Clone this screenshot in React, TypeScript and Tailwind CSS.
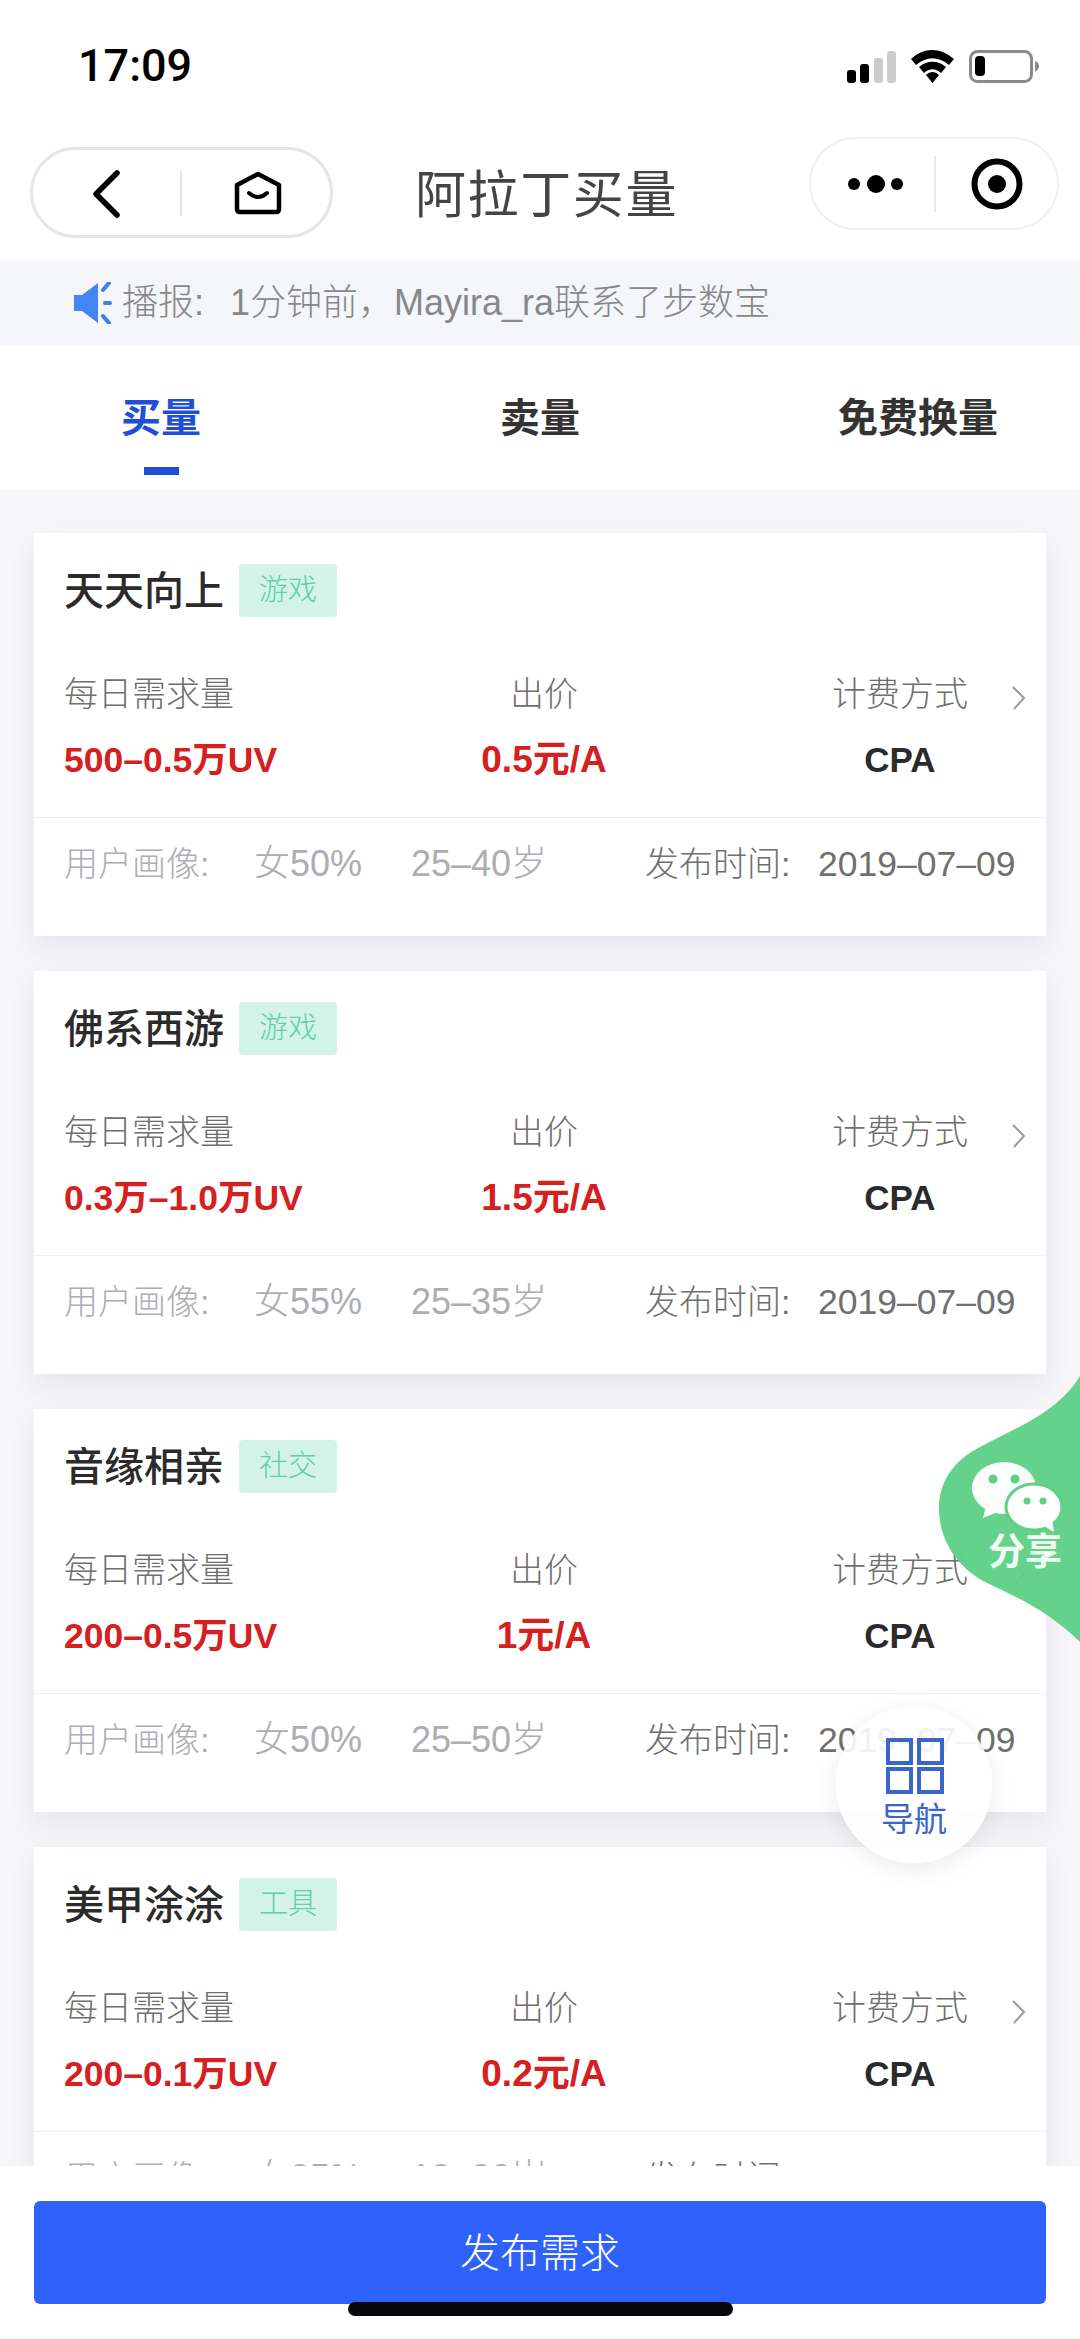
const cards = [
  { name: "天天向上", tag: "游戏", need: "500–0.5万UV", price: "0.5元/A", female: "女50%", age: "25–40岁" },
  { name: "佛系西游", tag: "游戏", need: "0.3万–1.0万UV", price: "1.5元/A", female: "女55%", age: "25–35岁" },
  { name: "音缘相亲", tag: "社交", need: "200–0.5万UV", price: "1元/A", female: "女50%", age: "25–50岁" },
  { name: "美甲涂涂", tag: "工具", need: "200–0.1万UV", price: "0.2元/A", female: "女35%", age: "18–30岁" },
];

const font = "font-['Liberation_Sans','Noto_Sans_CJK_SC',sans-serif]";

function StatusBar() {
  return (
    <div className="flex h-[130px] shrink-0 items-start bg-white pl-[78px] pr-[34px] pt-[44px]">
      <span className="font-['Roboto',sans-serif] text-[45px] font-medium leading-[44px] text-black">17:09</span>
      <svg className="ml-auto mt-[5px]" width="204" height="36" viewBox="0 0 204 36">
        <rect x="5" y="21" width="9" height="13" rx="3" fill="#000" />
        <rect x="18" y="15" width="9" height="19" rx="3" fill="#000" />
        <rect x="32" y="9" width="9" height="25" rx="3" fill="#ccc" />
        <rect x="45" y="2" width="9" height="32" rx="3" fill="#ccc" />
        <path d="M69 10 C82 -2 98 -2 112 10 L107 16 C96 7 85 7 74 16 Z" fill="#000" />
        <path d="M77 18 C85 11 96 11 104 18 L99 24 C93 19 88 19 82 24 Z" fill="#000" />
        <path d="M84 26 C88 22 93 22 97 26 L90.5 34 Z" fill="#000" />
        <rect x="128.5" y="2.5" width="61" height="30" rx="7" fill="none" stroke="#8a8a8a" strokeWidth="3" />
        <rect x="133" y="7" width="10" height="20" rx="4" fill="#000" />
        <path d="M193 12 C196 13 197 15 197 17 C197 19 196 21 193 23 Z" fill="#8a8a8a" />
      </svg>
    </div>
  );
}

function NavBar() {
  return (
    <div className="flex h-[130px] shrink-0 items-start bg-white pl-[30px] pr-[21px] pt-[7px]">
      <div className="mt-[10px] flex h-[91px] w-[303px] items-center rounded-full border-[3px] border-[#e6e6e6] bg-white">
        <svg className="ml-[58px] mt-[2px]" width="30" height="48" viewBox="0 0 30 48">
          <path d="M26 3 L5 24 L26 45" fill="none" stroke="#000" strokeWidth="5.5" strokeLinecap="round" strokeLinejoin="round" />
        </svg>
        <div className="ml-[59px] mt-[2px] h-[45px] w-[2px] bg-[#e6e6e6]" />
        <svg className="ml-[52px]" width="48" height="44" viewBox="0 0 48 44">
          <path d="M24 3 L45 14 L45 38 Q45 41 42 41 L6 41 Q3 41 3 38 L3 14 Z" fill="none" stroke="#000" strokeWidth="4.5" strokeLinejoin="round" />
          <path d="M15 22 Q24 30 33 22" fill="none" stroke="#000" strokeWidth="4" strokeLinecap="round" />
        </svg>
      </div>
      <span className="ml-[82px] mt-[31px] text-[51px] font-normal leading-[56px] tracking-[1.6px] text-[#444444]">阿拉丁买量</span>
      <div className="ml-auto flex h-[93px] w-[250px] items-center rounded-full border-[2px] border-[#f0f0f0] bg-white">
        <svg className="ml-[33px]" width="62" height="20" viewBox="0 0 62 20">
          <circle cx="10" cy="10" r="6" fill="#000" />
          <circle cx="32" cy="10" r="9" fill="#000" />
          <circle cx="53" cy="10" r="6" fill="#000" />
        </svg>
        <div className="ml-[28px] h-[56px] w-[2px] bg-[#e8e8e8]" />
        <svg className="ml-[35px]" width="52" height="52" viewBox="0 0 52 52">
          <circle cx="26" cy="26" r="22.5" fill="none" stroke="#000" strokeWidth="6" />
          <circle cx="26" cy="26" r="9" fill="#000" />
        </svg>
      </div>
    </div>
  );
}

function Notice() {
  return (
    <div className="flex h-[85px] shrink-0 items-center bg-[#f4f6fa] pl-[74px] text-[36px] font-light text-[#888888]">
      <svg width="40" height="42" viewBox="0 0 40 42" className="mr-[8px]">
        <path d="M0 13 H8 L24 1 V41 L8 29 H0 Z" fill="#4186f2" />
        <path d="M29 8 L35 1" stroke="#3f7fe8" strokeWidth="4" strokeLinecap="round" />
        <path d="M31 21 H36" stroke="#3f7fe8" strokeWidth="4" strokeLinecap="round" />
        <path d="M29 34 L35 41" stroke="#3f7fe8" strokeWidth="4" strokeLinecap="round" />
      </svg>
      <span className="w-[108px] whitespace-nowrap">播报:</span>
      <span className="whitespace-nowrap">1分钟前，Mayira_ra联系了步数宝</span>
    </div>
  );
}

function Tabs() {
  return (
    <div className="flex h-[145px] shrink-0 items-start bg-white pl-[122px] pt-[48px] text-[40px] font-bold leading-[50px] text-[#333333]">
      <div className="flex w-[78px] flex-col items-center text-[#1f4fd8]">
        <span className="whitespace-nowrap">买量</span>
        <div className="mt-[24px] h-[8px] w-[35px] bg-[#1f4fd8]" />
      </div>
      <span className="ml-[300px] whitespace-nowrap">卖量</span>
      <span className="ml-[258px] whitespace-nowrap">免费换量</span>
    </div>
  );
}

function Card({ c }: { c: (typeof cards)[number] }) {
  return (
    <div className="mb-[35px] h-[403px] bg-white pt-[31px] shadow-[0_12px_28px_rgba(40,45,90,0.09)]">
      <div className="flex h-[53px] items-center pl-[30px]">
        <span className="text-[40px] font-medium leading-[50px] text-[#2b2b2b]">{c.name}</span>
        <span className="ml-[15px] flex h-[53px] w-[98px] items-center justify-center rounded-[4px] bg-[#d3f3e9] text-[29px] font-light text-[#5fcfa5]">
          {c.tag}
        </span>
      </div>
      <div className="relative mt-[57px] grid grid-cols-[246px_468px_244px] pl-[30px] text-center">
        <span className="text-left text-[34px] font-light leading-[40px] text-[#6f6f6f]">每日需求量</span>
        <span className="text-[34px] font-light leading-[40px] text-[#6f6f6f]">出价</span>
        <span className="text-[34px] font-light leading-[40px] text-[#6f6f6f]">计费方式</span>
        <span className="mt-[26px] whitespace-nowrap text-left text-[35.5px] font-bold leading-[40px] text-[#d4201f]">{c.need}</span>
        <span className="mt-[26px] whitespace-nowrap text-[37px] font-bold leading-[40px] text-[#d4201f]">{c.price}</span>
        <span className="mt-[26px] text-[35px] font-bold leading-[40px] text-[#2b2b2b]">CPA</span>
        <svg className="absolute right-[20px] top-[12px]" width="15" height="24" viewBox="0 0 15 24">
          <path d="M2 1 L13 12 L3 23" fill="none" stroke="#9a9a9a" strokeWidth="2" />
        </svg>
      </div>
      <div className="mt-[37px] flex h-[85px] items-start border-t border-[#f0f0f2] pl-[30px] pt-[26px] text-[34px] font-light leading-[40px] text-[#adadb2]">
        <span className="w-[190px] whitespace-nowrap">用户画像:</span>
        <span className="w-[157px] whitespace-nowrap text-[36px]">{c.female}</span>
        <span className="w-[234px] whitespace-nowrap text-[36px]">{c.age}</span>
        <span className="w-[173px] whitespace-nowrap text-[#6f6f6f]">发布时间:</span>
        <span className="whitespace-nowrap text-[35.5px] text-[#6f6f6f]">2019–07–09</span>
      </div>
    </div>
  );
}

function Share() {
  return (
    <div className="absolute left-[938px] top-[1376px] h-[266px] w-[142px]">
      <svg width="142" height="266" viewBox="0 0 142 266">
        <path d="M142 0 C120 37 75 53 42 71 C15 85 1 106 1 132 C1 170 25 195 49 207 C90 226 115 240 142 266 Z" fill="#5fd086" fillOpacity="0.96" />
        <ellipse cx="66" cy="112" rx="32" ry="26" fill="#fff" fillOpacity="0.96" />
        <path d="M48 130 L45 142 L62 135 Z" fill="#fff" />
        <ellipse cx="96" cy="131" rx="28" ry="23" fill="#fff" stroke="#5fd086" strokeWidth="3" />
        <path d="M106 150 L116 156 L114 144 Z" fill="#fff" />
        <circle cx="55" cy="103" r="4.5" fill="#5fd086" />
        <circle cx="77" cy="103" r="4.5" fill="#5fd086" />
        <circle cx="89" cy="125" r="3.5" fill="#5fd086" />
        <circle cx="105" cy="125" r="3.5" fill="#5fd086" />
      </svg>
      <span className="absolute left-[50px] top-[157px] whitespace-nowrap text-[37px] font-bold leading-[40px] text-white/90">分享</span>
    </div>
  );
}

function NavFab() {
  return (
    <div className="absolute left-[836px] top-[1706px] flex h-[157px] w-[156px] flex-col items-center rounded-full bg-white/90 pt-[32px] shadow-[0_6px_24px_rgba(0,0,0,0.08)]">
      <svg className="ml-[2px]" width="58" height="56" viewBox="0 0 58 56">
        <rect x="2" y="2" width="23" height="23" fill="none" stroke="#3b66c9" strokeWidth="4" />
        <rect x="33" y="2" width="23" height="23" fill="none" stroke="#3b66c9" strokeWidth="4" />
        <rect x="2" y="31" width="23" height="23" fill="none" stroke="#3b66c9" strokeWidth="4" />
        <rect x="33" y="31" width="23" height="23" fill="none" stroke="#3b66c9" strokeWidth="4" />
      </svg>
      <span className="mt-[7px] whitespace-nowrap text-[33px] leading-[38px] text-[#3b66c9]">导航</span>
    </div>
  );
}

export default function App() {
  return (
    <div className={`relative flex h-[2339px] w-[1080px] flex-col overflow-hidden bg-[#f7f7fa] ${font}`}>
      <StatusBar />
      <NavBar />
      <Notice />
      <Tabs />
      <div className="min-h-0 flex-1 overflow-hidden px-[34px] pt-[43px]">
        {cards.map((c) => (
          <Card key={c.name} c={c} />
        ))}
      </div>
      <div className="relative h-[173px] shrink-0 bg-white px-[34px] pt-[35px]">
        <div className="flex h-[103px] items-center justify-center rounded-[6px] bg-[#2e62fb] text-[40px] font-light text-white">
          发布需求
        </div>
      </div>
      <Share />
      <NavFab />
      <div className="absolute left-[348px] top-[2302px] h-[14px] w-[385px] rounded-full bg-[#07080c]" />
    </div>
  );
}
